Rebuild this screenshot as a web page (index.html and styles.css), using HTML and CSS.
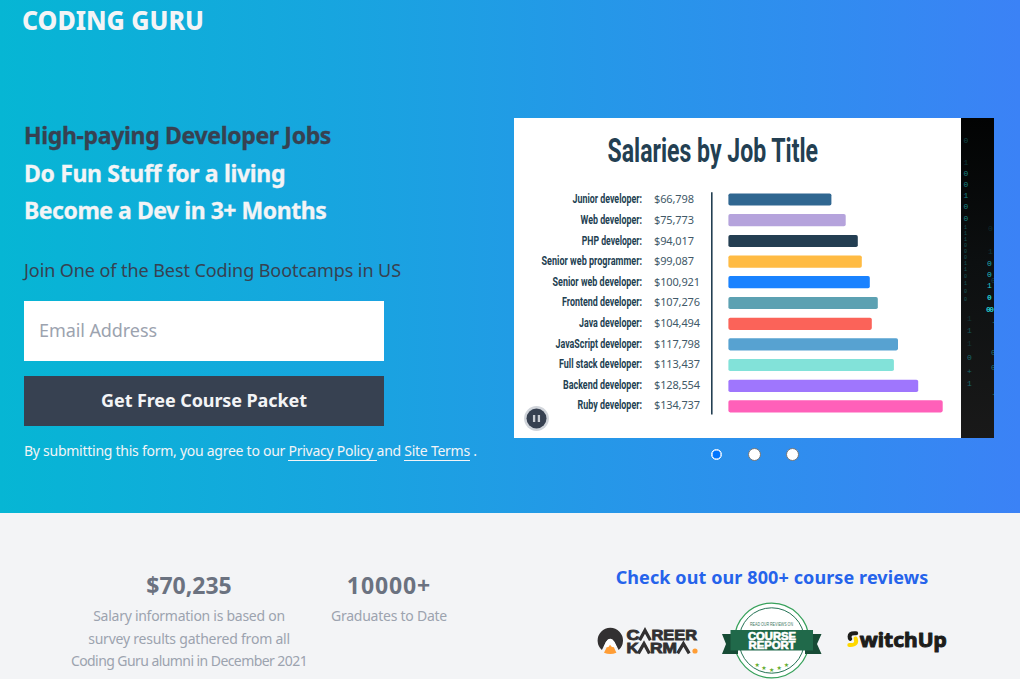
FILE: index.html
```html
<!DOCTYPE html>
<html lang="en">
<head>
<meta charset="utf-8">
<title>Coding Guru</title>
<link rel="stylesheet" href="styles.css">
</head>
<body>
<section class="hero">
  <header class="brand"><span class="t-brand">CODING GURU</span></header>
  <div class="columns">
    <div class="pitch">
      <h1 class="headline">
        <span class="dark t-h1">High-paying Developer Jobs</span>
        <span class="t-h2">Do Fun Stuff for a living</span>
        <span class="t-h3">Become a Dev in 3+ Months</span>
      </h1>
      <p class="join"><span class="t-join">Join One of the Best Coding Bootcamps in US</span></p>
      <div class="field"><span class="t-email">Email Address</span></div>
      <div class="submit"><span class="t-submit">Get Free Course Packet</span></div>
      <p class="terms">By submitting this form, you agree to our <a>Privacy Policy </a>and <a>Site Terms</a> .</p>
    </div>
    <div class="carousel">
      <div class="slides">
        <svg class="chart" viewBox="0 0 447 320" width="447" height="320">
          <text class="chart-title" x="93.5" y="44" textLength="210.5" lengthAdjust="spacingAndGlyphs">Salaries by Job Title</text>
          <g class="labels">
            <text x="58.5" y="85.3" textLength="69.5" lengthAdjust="spacingAndGlyphs">Junior developer:</text>
            <text x="66.5" y="105.9" textLength="61.5" lengthAdjust="spacingAndGlyphs">Web developer:</text>
            <text x="67.7" y="126.5" textLength="60.3" lengthAdjust="spacingAndGlyphs">PHP developer:</text>
            <text x="27.5" y="147.1" textLength="100.5" lengthAdjust="spacingAndGlyphs">Senior web programmer:</text>
            <text x="38.5" y="167.7" textLength="89.5" lengthAdjust="spacingAndGlyphs">Senior web developer:</text>
            <text x="48" y="188.3" textLength="80" lengthAdjust="spacingAndGlyphs">Frontend developer:</text>
            <text x="65" y="208.9" textLength="63" lengthAdjust="spacingAndGlyphs">Java developer:</text>
            <text x="41.5" y="229.5" textLength="86.5" lengthAdjust="spacingAndGlyphs">JavaScript developer:</text>
            <text x="45" y="250.1" textLength="83" lengthAdjust="spacingAndGlyphs">Full stack developer:</text>
            <text x="49" y="270.7" textLength="79" lengthAdjust="spacingAndGlyphs">Backend developer:</text>
            <text x="63.5" y="291.3" textLength="64.5" lengthAdjust="spacingAndGlyphs">Ruby developer:</text>
          </g>
          <g class="values">
            <text x="140" y="85.3" textLength="40">$66,798</text>
            <text x="140" y="105.9" textLength="40">$75,773</text>
            <text x="140" y="126.5" textLength="40">$94,017</text>
            <text x="140" y="147.1" textLength="40">$99,087</text>
            <text x="140" y="167.7" textLength="46">$100,921</text>
            <text x="140" y="188.3" textLength="46">$107,276</text>
            <text x="140" y="208.9" textLength="46">$104,494</text>
            <text x="140" y="229.5" textLength="46">$117,798</text>
            <text x="140" y="250.1" textLength="46">$113,437</text>
            <text x="140" y="270.7" textLength="46">$128,554</text>
            <text x="140" y="291.3" textLength="46">$134,737</text>
          </g>
          <path d="M197.8 74.3V296.5" stroke="#233f52" stroke-width="1.6"/>
          <rect x="214.4" y="75.4" width="103" height="12.2" rx="1.8" fill="#306791"/>
          <rect x="214.4" y="96" width="117.3" height="12.2" rx="1.8" fill="#b5a3dc"/>
          <rect x="214.4" y="116.9" width="129.4" height="12.2" rx="1.8" fill="#233e52"/>
          <rect x="214.4" y="137.5" width="133.4" height="12.2" rx="1.8" fill="#ffbb43"/>
          <rect x="214.4" y="158" width="141.4" height="12.2" rx="1.8" fill="#1982ff"/>
          <rect x="214.4" y="178.9" width="149.4" height="12.2" rx="1.8" fill="#5ca1b2"/>
          <rect x="214.4" y="199.7" width="143.4" height="12.2" rx="1.8" fill="#fb6359"/>
          <rect x="214.4" y="220.2" width="169.6" height="12.2" rx="1.8" fill="#57a2d1"/>
          <rect x="214.4" y="240.9" width="165.5" height="12.2" rx="1.8" fill="#82e2d9"/>
          <rect x="214.4" y="261.8" width="189.8" height="12.2" rx="1.8" fill="#9f76fd"/>
          <rect x="214.4" y="282.2" width="214.3" height="12.2" rx="1.8" fill="#ff60b9"/>
        </svg>
        <svg class="matrix" viewBox="0 0 33 320" width="33" height="320">
          <defs><linearGradient id="night" x2="0" y2="1"><stop stop-color="#020303"/><stop offset=".45" stop-color="#0c0f10"/><stop offset="1" stop-color="#191919"/></linearGradient></defs>
          <rect width="33" height="320" fill="url(#night)"/>
          <g class="rain">
            <g opacity=".6">
              <text x="2.5" y="25" opacity=".5">0</text><text x="2.5" y="47" opacity=".4">1</text><text x="2.5" y="58">0</text><text x="2.5" y="69">0</text><text x="2.5" y="80">1</text><text x="2.5" y="91">0</text><text x="2.5" y="103">0</text>
            </g>
            <g opacity=".35" font-size="5">
              <text x="3" y="111">1</text><text x="3" y="117">1</text><text x="3" y="123">1</text><text x="3" y="129">0</text><text x="3" y="135">0</text><text x="3" y="141">0</text><text x="3" y="147">1</text><text x="3" y="153">1</text><text x="3" y="160">0</text><text x="3" y="167">1</text><text x="3" y="175">0</text><text x="3" y="183">0</text>
            </g>
            <g opacity=".45">
              <text x="6" y="203" opacity=".4">1</text><text x="6" y="215" opacity=".8">1</text><text x="6" y="228" opacity=".4">1</text><text x="6" y="242">0</text><text x="6" y="256">+</text><text x="6" y="268">1</text>
            </g>
            <text x="27" y="113" opacity=".15">0</text><text x="27" y="136" opacity=".2">1</text>
            <text x="26" y="148" opacity=".8">0</text><text x="26" y="159" opacity=".9">0</text><text x="26" y="170">1</text><text x="26" y="182" font-weight="bold">0</text><text x="25" y="194" font-weight="bold" textLength="8">00</text>
            <g opacity=".5"><text x="30" y="165" opacity=".5">0</text><text x="30" y="205">.</text><text x="30" y="237">0</text><text x="30" y="252">0</text><text x="30" y="277">.</text></g>
          </g>
        </svg>
        <div class="pause"><svg viewBox="0 0 25 25" width="25" height="25"><circle cx="12.5" cy="12.5" r="12.4" fill="#d1d5db"/><circle cx="12.5" cy="12.5" r="10" fill="#374151"/><path d="M10.1 9V16M14.9 9V16" stroke="#c9cdd3" stroke-width="2.3"/></svg></div>
      </div>
      <div class="dots"><i class="dot active"></i><i class="dot"></i><i class="dot"></i></div>
    </div>
  </div>
</section>
<section class="facts">
  <div class="stats">
    <div class="stat salary">
      <strong>$70,235</strong>
      <p><span class="t-s1">Salary information is based on</span><span class="t-s2">survey results gathered from all</span><span class="t-s3">Coding Guru alumni in December 2021</span></p>
    </div>
    <div class="stat grads">
      <strong class="t-grads">10000+</strong>
      <p><span class="t-g1">Graduates to Date</span></p>
    </div>
  </div>
  <div class="reviews">
    <h2><span class="t-check">Check out our 800+ course reviews</span></h2>
    <div class="logos">
      <svg width="102" height="32" viewBox="0 0 102 32">
        <g transform="translate(-.3 1.5)"><path d="M5.2 23.5A12.7 12.7 0 1 1 22 23.5L17.8 15.4Q13.4 9.2 9.2 15.4Z" fill="#323031"/>
        <path d="M9.2 15.4Q13.4 9.2 17.8 15.4L20 20.5H7Z" fill="#fff"/>
        <path d="M7.3 26.2L10.2 20.6Q11.7 21.2 13.3 18.2Q15.4 21.2 17 20.6L19.7 26.2Q13.5 29 7.3 26.2Z" fill="#ff9d35"/></g>
        <g class="karma"><text x="29.6" y="14.6" textLength="13" lengthAdjust="spacingAndGlyphs">C</text><text x="54.5" y="14.6" textLength="45.5" lengthAdjust="spacingAndGlyphs">REER</text>
        <text x="29.6" y="28" textLength="12" lengthAdjust="spacingAndGlyphs">K</text><text x="53" y="28" textLength="27" lengthAdjust="spacingAndGlyphs">RM</text></g>
        <path d="M42.6 15.2L48 5.4L53.4 15.2M41.4 28.4L47 18.6L52.4 28.4M80.6 28.4L86.4 18.6L92.2 28.4" fill="none" stroke="#323031" stroke-width="3.2"/>
        <circle cx="98" cy="26" r="2.6" fill="#ff9d35"/>
      </svg>
      <svg class="badge" width="100" height="77" viewBox="0 0 100 77">
        <circle cx="49.7" cy="38.5" r="37.3" fill="#fff" stroke="#37a15b" stroke-width="1.3"/>
        <circle cx="49.7" cy="38.5" r="32.7" fill="none" stroke="#247254" stroke-width="1"/>
        <path d="M0 32H16V52H0L4 42ZM99.5 32H83V52H99.5L95 42Z" fill="#164b35"/>
        <path d="M8.5 28H91V48.5H8.5Z" fill="#20694a"/>
        <text class="badge-note" x="28" y="23.6" textLength="43" lengthAdjust="spacingAndGlyphs">READ OUR REVIEWS ON</text>
        <g class="badge-name"><text x="26" y="38" textLength="48" lengthAdjust="spacingAndGlyphs">COURSE</text><text x="26.5" y="47" textLength="47" lengthAdjust="spacingAndGlyphs">REPORT</text></g>
        <g class="stars"><text x="32.4" y="65.3">★</text><text x="39.3" y="68.3">★</text><text x="47" y="69.5">★</text><text x="54.6" y="68.3">★</text><text x="61.8" y="65.3">★</text></g>
      </svg>
      <svg width="102" height="26" viewBox="0 0 102 26">
        <path d="M9.2 5.2H7.5Q2.6 5.2 2.6 8.4Q2.6 10.2 3.2 10.8" fill="none" stroke="#1d1d1b" stroke-width="4" stroke-linecap="round"/>
        <path d="M8.6 10.5Q11 17 3.4 17H2.3" fill="none" stroke="#ffd800" stroke-width="4" stroke-linecap="round"/>
        <text class="switch" x="12.8" y="18.5" textLength="87" lengthAdjust="spacingAndGlyphs">witchUp</text>
      </svg>
    </div>
  </div>
</section>
</body>
</html>
```
FILE: styles.css
```css
* { box-sizing: border-box; }
body { margin: 0; height: 679px; overflow: hidden; font-family: "Noto Sans", "Open Sans", sans-serif; background: #f3f4f6; }
h1, h2, p { margin: 0; }
.hero { height: 513px; background: linear-gradient(90deg, #06b6d4, #3b82f6); }
.brand { height: 117px; padding: 0 0 0 22px; color: #f3f4f6; font-size: 27px; font-weight: 800; line-height: 40px; white-space: nowrap; }
.t-brand { display: inline-block; transform: scaleX(.925); transform-origin: left; }
.columns { display: flex; }
.pitch { width: 514px; padding-left: 24px; white-space: nowrap; }
.headline { display: flex; flex-direction: column; align-items: flex-start; color: #f3f4f6; font-size: 23px; font-weight: 700; line-height: 37.5px; -webkit-text-stroke: .3px; }
.t-h1, .t-h2 { letter-spacing: -.34px; }
.t-h3 { letter-spacing: -.47px; }
.dark { color: #374151; }
.join { margin-top: 25.5px; color: #374151; font-size: 18px; line-height: 30px; letter-spacing: -.08px; }
.field { width: 360px; height: 60px; margin-top: 16px; padding-left: 15px; background: #fff; color: #9ca3af; font-size: 18px; line-height: 59px; letter-spacing: -.08px; }
.submit { width: 360px; height: 50px; margin-top: 15px; background: #374151; color: #f3f4f6; font-size: 18px; font-weight: 700; line-height: 49px; letter-spacing: -.1px; text-align: center; }
.terms { margin-top: 13px; color: #f3f4f6; font-size: 14px; line-height: 23px; letter-spacing: -.26px; }
.terms a { border-bottom: 1px solid #f3f4f6; }
.carousel { width: 480px; padding-top: 1px; }
.slides { position: relative; display: flex; height: 320px; background: #fff; }
.pause { position: absolute; left: 10px; bottom: 7px; height: 25px; }
.pause svg { display: block; }
.dots { display: flex; justify-content: center; align-items: center; gap: 25px; height: 33px; padding-left: 1px; }
.dot { width: 13px; height: 13px; border: 1px solid #767676; border-radius: 50%; background: #fff; }
.active { width: 11px; height: 11px; margin: 0 1px; border: 1px solid #fff; background: #0075ff; box-shadow: inset 0 0 0 .6px #fff; }
.chart-title { font: 700 33px Roboto, sans-serif; fill: #233f52; }
.labels { font: 700 12.2px Roboto, sans-serif; fill: #233f52; }
.values { font: 400 11px "Noto Sans", sans-serif; fill: #425968; }
.rain { font-family: "Liberation Mono", monospace; font-size: 8px; fill: #22cbd3; }
.facts { display: flex; height: 166px; background: #f3f4f6; }
.stats { display: flex; width: 514px; padding-top: 54px; text-align: center; white-space: nowrap; }
.stat strong { display: block; color: #6b7280; font-size: 23px; line-height: 36px; }
.stat p { margin-top: 2px; color: #9ca3af; font-size: 14px; line-height: 22.5px; }
.stat p span { display: block; }
.t-s1 { letter-spacing: -.27px; }
.t-s2 { letter-spacing: -.22px; }
.t-s3 { letter-spacing: -.57px; }
.t-g1 { letter-spacing: -.25px; }
.stat .t-grads { letter-spacing: .9px; }
.salary { width: 240px; margin-left: 69px; }
.grads { width: 160px; }
.reviews { width: 506px; padding-top: 49px; }
.reviews h2 { padding-left: 10px; color: #2563eb; font-size: 18px; line-height: 30px; letter-spacing: .1px; text-align: center; white-space: nowrap; }
.logos { display: flex; align-items: center; gap: 23px; padding-left: 83px; margin-top: 10px; }
.logos svg { flex: none; }
.logos svg:last-child { margin-left: 2px; }
.karma { font: 700 15.5px "Liberation Sans", sans-serif; fill: #323031; stroke: #323031; stroke-width: .9; }
.badge-note { font: 400 5.5px "Liberation Sans", sans-serif; fill: #437663; }
.badge-name { font: 700 11px "Liberation Sans", sans-serif; fill: #fff; stroke: #fff; stroke-width: .7; }
.stars { font: 6px "DejaVu Sans", sans-serif; fill: #64ae30; }
.switch { font: 700 20px "Noto Sans", sans-serif; fill: #1d1d1b; stroke: #1d1d1b; stroke-width: 1; stroke-linejoin: round; }
```
